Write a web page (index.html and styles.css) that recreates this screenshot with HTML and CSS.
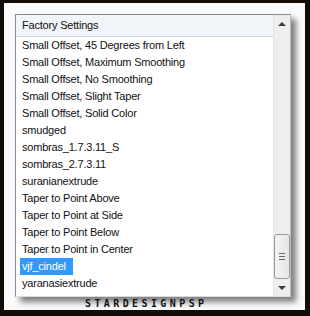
FILE: index.html
```html
<!DOCTYPE html>
<html>
<head>
<meta charset="utf-8">
<link rel="stylesheet" href="styles.css">
</head>
<body>
<div class="frame">
  <div class="canvas">
    <div class="listbox">
      <div class="main">
        <div class="header">Factory Settings</div>
        <div class="items">
          <div class="item">Small Offset, 45 Degrees from Left</div>
          <div class="item">Small Offset, Maximum Smoothing</div>
          <div class="item">Small Offset, No Smoothing</div>
          <div class="item">Small Offset, Slight Taper</div>
          <div class="item">Small Offset, Solid Color</div>
          <div class="item">smudged</div>
          <div class="item">sombras_1.7.3.11_S</div>
          <div class="item">sombras_2.7.3.11</div>
          <div class="item">suranianextrude</div>
          <div class="item">Taper to Point Above</div>
          <div class="item">Taper to Point at Side</div>
          <div class="item">Taper to Point Below</div>
          <div class="item">Taper to Point in Center</div>
          <div class="item"><span class="sel">vjf_cindel</span></div>
          <div class="item">yaranasiextrude</div>
        </div>
      </div>
      <div class="scrollbar">
        <div class="arrow up"></div>
        <div class="track">
          <div class="thumb"><div class="grip"></div></div>
        </div>
        <div class="arrow down"></div>
      </div>
    </div>
    <div class="caption">STARDESIGNPSP</div>
  </div>
</div>
</body>
</html>
```

FILE: styles.css
```css
html, body {
  margin: 0;
  padding: 0;
  background: #120d08;
}
.frame {
  width: 310px;
  height: 316px;
  box-sizing: border-box;
  padding: 3px 5px 6px 4px;
  background: #120d08;
}
.canvas {
  height: 100%;
  background: #fbfbfb;
  padding: 11px 0 0 11px;
  box-sizing: border-box;
  display: flex;
  flex-direction: column;
}
.listbox {
  width: 276px;
  height: 283px;
  box-sizing: border-box;
  border: 1px solid #8a8d92;
  border-right-color: #b9bcc0;
  border-bottom-color: #d8dadd;
  background: #fff;
  display: flex;
  box-shadow: 5px 5px 6px rgba(0,0,0,0.5);
  overflow: hidden;
}
.main {
  flex: 1;
  display: flex;
  flex-direction: column;
  font-family: "Liberation Sans", Arial, sans-serif;
  font-size: 11px;
  letter-spacing: -0.2px;
  color: #111;
}
.header {
  height: 22px;
  box-sizing: border-box;
  border-bottom: 1px solid #cfd3d8;
  background: #f1f4f8;
  padding-left: 6px;
  line-height: 21px;
}
.item {
  height: 17px;
  line-height: 17px;
  padding-left: 6px;
  white-space: nowrap;
}
.sel {
  background: #3399ff;
  color: #fff;
  margin-left: -2px;
  padding: 0 7px 0 2px;
  display: inline-block;
}
.scrollbar {
  width: 16px;
  background: #eeeeee;
  border-left: 1px solid #e4e4e4;
  display: flex;
  flex-direction: column;
}
.arrow {
  height: 17px;
  display: flex;
  align-items: center;
  justify-content: center;
}
.arrow::before {
  content: "";
  width: 0;
  height: 0;
  border-left: 4px solid transparent;
  border-right: 4px solid transparent;
}
.up::before { border-bottom: 4px solid #3a3a3a; }
.down::before { border-top: 4px solid #3a3a3a; }
.track {
  flex: 1;
  display: flex;
  flex-direction: column;
  justify-content: flex-end;
}
.thumb {
  height: 45px;
  box-sizing: border-box;
  border: 1px solid #9a9a9a;
  border-radius: 3px;
  background: linear-gradient(to right, #f4f4f4, #e6e6e6);
  display: flex;
  align-items: center;
  justify-content: center;
}
.grip {
  width: 6px;
  height: 5px;
  border-top: 1px solid #666;
  border-bottom: 1px solid #666;
  position: relative;
}
.grip::after {
  content: "";
  position: absolute;
  left: 0;
  right: 0;
  top: 2px;
  border-top: 1px solid #666;
}
.caption {
  padding-left: 70px;
  padding-top: 2px;
  font-family: "DejaVu Sans Mono", monospace;
  font-weight: bold;
  font-size: 10px;
  line-height: 10px;
  letter-spacing: 3.4px;
  color: #111;
}
```
